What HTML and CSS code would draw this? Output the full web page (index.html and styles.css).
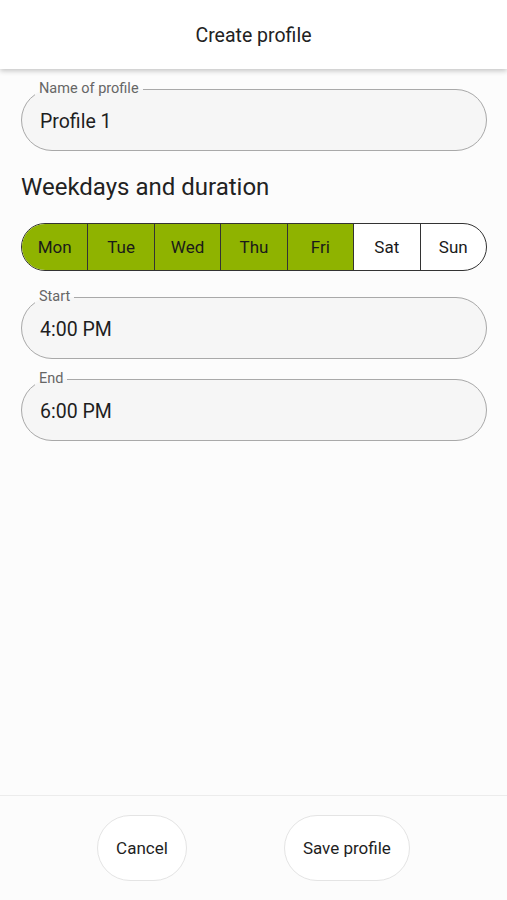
FILE: index.html
```html
<!DOCTYPE html>
<html>
<head>
<meta charset="utf-8">
<link rel="stylesheet" href="styles.css">
</head>
<body>
<div class="app">
  <header class="topbar">Create profile</header>
  <main class="content">
    <fieldset class="field">
      <legend class="field-label">Name of profile</legend>
      <div class="field-value">Profile 1</div>
    </fieldset>
    <h2 class="section-title">Weekdays and duration</h2>
    <div class="days">
      <div class="day on">Mon</div>
      <div class="day on">Tue</div>
      <div class="day on">Wed</div>
      <div class="day on">Thu</div>
      <div class="day on">Fri</div>
      <div class="day">Sat</div>
      <div class="day">Sun</div>
    </div>
    <fieldset class="field field-start">
      <legend class="field-label">Start</legend>
      <div class="field-value">4:00 PM</div>
    </fieldset>
    <fieldset class="field field-end">
      <legend class="field-label">End</legend>
      <div class="field-value">6:00 PM</div>
    </fieldset>
  </main>
  <footer class="footer">
    <button class="btn">Cancel</button>
    <button class="btn">Save profile</button>
  </footer>
</div>
</body>
</html>
```
FILE: styles.css
```css
html, body {
  margin: 0;
  padding: 0;
  background: #fcfcfc;
  font-family: Roboto, "Noto Sans", sans-serif;
  color: #1e1e1e;
}
.app {
  display: flex;
  flex-direction: column;
  height: 100vh;
}
.topbar {
  height: 69px;
  box-sizing: border-box;
  padding-top: 2px;
  background: #ffffff;
  display: flex;
  align-items: center;
  justify-content: center;
  font-size: 19.5px;
  color: #222;
  box-shadow: 0 2px 5px rgba(0, 0, 0, 0.22);
  position: relative;
  z-index: 1;
}
.content {
  flex: 1;
  padding: 12px 20px 0 21px;
}
.field {
  margin: 0;
  padding: 0 18px 0 18px;
  border: 1px solid #a9a9a9;
  border-radius: 31px;
  background: #f6f6f6;
  height: 70px;
  box-sizing: border-box;
  min-width: 0;
}
.field-label {
  font-size: 14.5px;
  line-height: 16px;
  color: #666;
  padding: 0 4px;
  margin-left: -5px;
}
.field-value {
  font-size: 19.5px;
  line-height: 22px;
  padding-top: 14px;
  color: #1e1e1e;
}
.section-title {
  margin: 22px 0 22px 0;
  font-size: 24px;
  line-height: 28px;
  font-weight: 400;
  color: #222;
}
.days {
  display: flex;
  height: 48px;
  border: 1.5px solid #333;
  border-radius: 24px;
  overflow: hidden;
  box-sizing: border-box;
  background: #fff;
}
.day {
  flex: 1;
  display: flex;
  align-items: center;
  justify-content: center;
  font-size: 17px;
  color: #1a1a1a;
  border-left: 1.5px solid #333;
}
.day:first-child {
  border-left: none;
}
.day.on {
  background: #8fb300;
}
.field-start {
  margin-top: 18px;
}
.field-end {
  margin-top: 12px;
}
.footer {
  height: 105px;
  border-top: 1px solid #ececec;
  box-sizing: border-box;
  display: flex;
  justify-content: space-evenly;
  align-items: flex-start;
  padding-top: 19px;
  background: #fcfcfc;
}
.btn {
  height: 66px;
  padding: 0 18px;
  border: 1px solid #e4e4e4;
  border-radius: 33px;
  background: #fff;
  font-family: Roboto, "Noto Sans", sans-serif;
  font-size: 17px;
  color: #1e1e1e;
}
```
